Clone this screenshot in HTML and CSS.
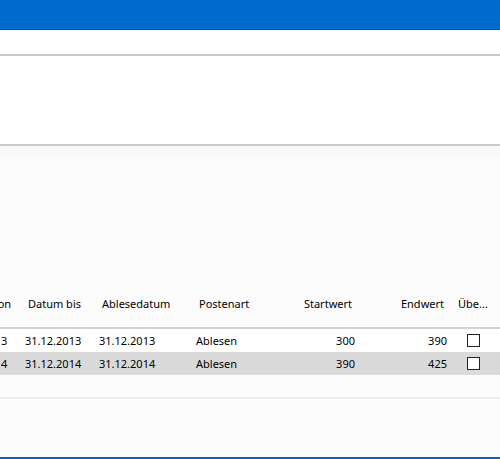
FILE: index.html
```html
<!DOCTYPE html>
<html lang="de">
<head>
    <meta charset="UTF-8">
    <meta name="viewport" content="width=device-width, initial-scale=1.0">
    <title>Zählerstände</title>
    <link rel="stylesheet" href="styles.css">
</head>
<body>

<div class="window">
    <div class="title-bar"></div>
    <div class="toolbar"></div>
    <div class="filter-panel"></div>

    <div class="grid-area">
        <div class="grid-scroll">
            <table class="grid">
                <colgroup>
                    <col class="c-von">
                    <col class="c-bis">
                    <col class="c-ablese">
                    <col class="c-art">
                    <col class="c-start">
                    <col class="c-end">
                    <col class="c-ueb">
                </colgroup>
                <thead>
                    <tr>
                        <th>Datum von</th>
                        <th>Datum bis</th>
                        <th>Ablesedatum</th>
                        <th>Postenart</th>
                        <th class="num">Startwert</th>
                        <th class="num">Endwert</th>
                        <th>Übe...</th>
                    </tr>
                </thead>
                <tbody>
                    <tr>
                        <td>01.01.2013</td>
                        <td>31.12.2013</td>
                        <td>31.12.2013</td>
                        <td>Ablesen</td>
                        <td class="num">300</td>
                        <td class="num">390</td>
                        <td class="check"><span class="box"></span></td>
                    </tr>
                    <tr class="selected">
                        <td>01.01.2014</td>
                        <td>31.12.2014</td>
                        <td>31.12.2014</td>
                        <td>Ablesen</td>
                        <td class="num">390</td>
                        <td class="num">425</td>
                        <td class="check"><span class="box"></span></td>
                    </tr>
                </tbody>
            </table>
        </div>
    </div>

    <div class="status-area"></div>
</div>

</body>
</html>
```

FILE: styles.css
```css
html, body {
    margin: 0;
    height: 100%;
}
body {
    font-family: 'Noto Sans', sans-serif;
    font-size: 11px;
    color: #000;
    background-color: #fcfcfc;
    overflow: hidden;
}
.window {
    display: flex;
    flex-direction: column;
    height: 459px;
}
.title-bar {
    height: 30px;
    background-color: #006acf;
    border-bottom: 1px solid #0058c8;
    box-sizing: border-box;
}
.toolbar {
    height: 26px;
    background-color: #fff;
    border-bottom: 2px solid #c9c9c9;
    box-sizing: border-box;
}
.filter-panel {
    height: 90px;
    background-color: #fff;
    border-bottom: 2px solid #c9c9c9;
    box-sizing: border-box;
}
.grid-area {
    height: 253px;
    display: flex;
    flex-direction: column;
    justify-content: flex-end;
    border-bottom: 2px solid #ebebeb;
    box-sizing: border-box;
    padding-bottom: 22px;
    background: linear-gradient(#f7f7f7, #fcfcfc 16px);
}
.grid-scroll {
    overflow: hidden;
}
.grid {
    border-collapse: collapse;
    table-layout: fixed;
    width: 553px;
    margin-left: -53px;
}
.c-von { width: 74px; }
.c-bis { width: 74px; }
.c-ablese { width: 97px; }
.c-art { width: 78px; }
.c-start { width: 89px; }
.c-end { width: 92px; }
.c-ueb { width: 49px; }
.grid th {
    font-weight: normal;
    text-align: left;
    white-space: nowrap;
    overflow: hidden;
    padding: 0 7px;
    height: 48px;
    color: #000;
    border-bottom: 2px solid #d4d4d4;
}
.grid td {
    padding: 0 4px;
    height: 23px;
    white-space: nowrap;
    background-color: #fff;
}
.grid .num {
    text-align: right;
}
.grid tr.selected td {
    background-color: #dadada;
}
.grid td.check {
    padding: 0 0 0 16px;
}
.box {
    display: block;
    width: 11px;
    height: 11px;
    border: 1px solid #222;
    background-color: #fff;
}
.status-area {
    flex: 1;
    background-color: #fcfcfc;
    border-bottom: 2px solid #0066cc;
}
```
